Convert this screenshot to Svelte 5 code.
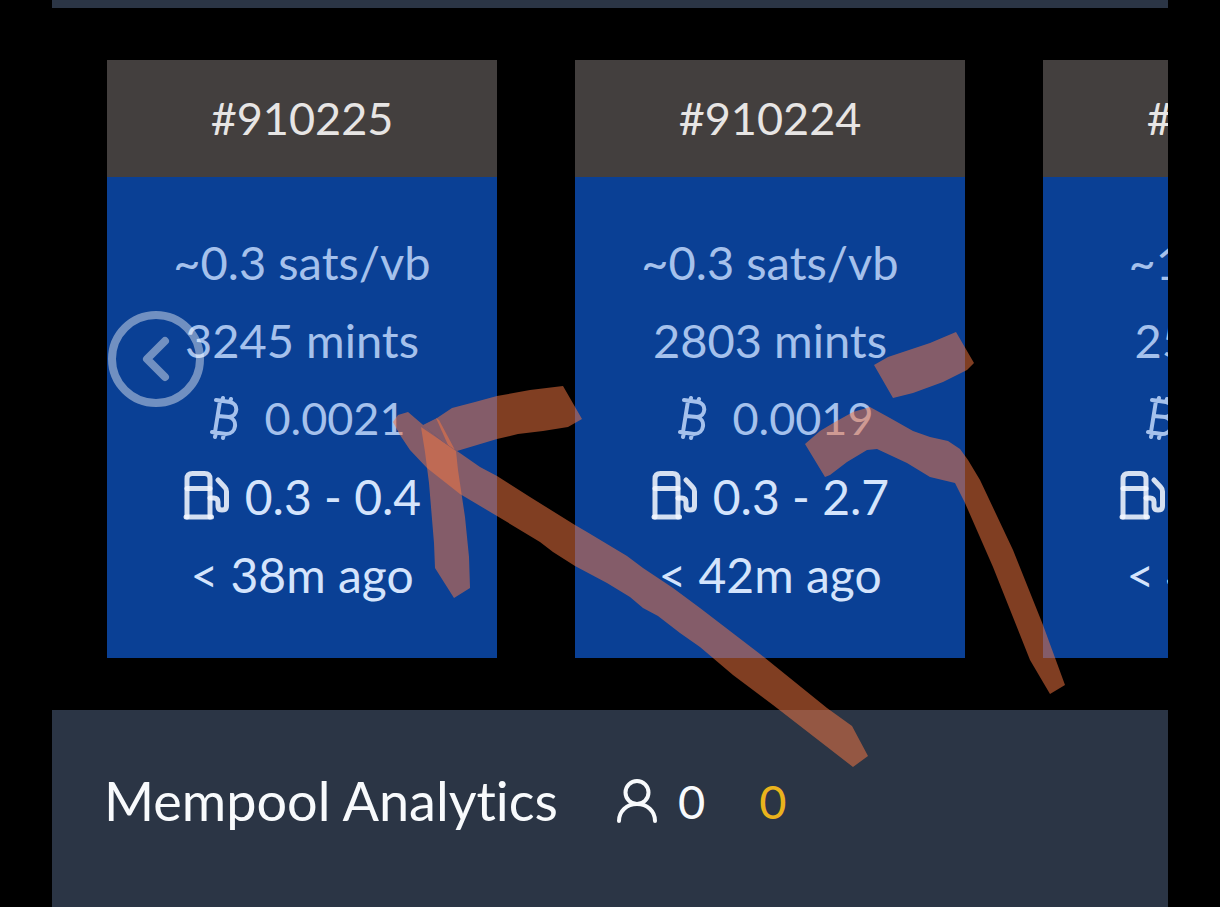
<script>
  const blocks = [
    { height: 910225, rate: '0.3', mints: 3245, btc: '0.0021', fees: '0.3 - 0.4', age: '38m' },
    { height: 910224, rate: '0.3', mints: 2803, btc: '0.0019', fees: '0.3 - 2.7', age: '42m' },
    { height: 910223, rate: '1', mints: 258, btc: '0.0026', fees: '0.3 - 3.0', age: '44m' }
  ];

  // hand-drawn marker strokes laid over the page
  const strokes = [
    '393,422 398,415 408,412 443,442 457,451 480,467 497,476 530,497 575,525 587,532 627,556 643,568 673,588 700,608 760,654 827,708 852,726 868,756 853,767 773,705 733,675 700,647 680,633 658,616 643,608 630,597 607,583 575,566 553,552 540,542 497,516 460,494 427,468 410,450 400,435',
    '423,425 437,418 452,408 475,402 497,396 530,390 563,386 582,419 568,427 543,431 518,434 497,439 457,451 443,442',
    '421,427 443,442 456,451 458,470 462,497 465,517 469,557 470,588 454,598 435,568 434,543 429,483 425,452',
    '436,418 439,420 455,450 448,445',
    '805,444 820,431 835,422 853,412 870,407 890,418 913,431 930,437 948,441 960,449 968,460 980,480 1013,550 1043,625 1065,685 1050,694 1030,660 993,567 965,503 955,483 930,477 907,463 877,449 867,450 847,462 830,475 825,477',
    '874,365 888,357 930,343 956,332 974,363 967,370 943,382 913,393 893,398'
  ];
</script>

<div class="page">
  <div class="strip"></div>

  <section class="carousel" aria-label="Blocks">
    {#each blocks as b}
      <article class="block">
        <h2>#{b.height}</h2>
        <div class="body">
          <div class="row dim">~{b.rate} sats/vb</div>
          <div class="row dim">{b.mints} mints</div>
          <div class="row dim btc">
            <svg width="30" height="46" viewBox="0 0 30 46" aria-hidden="true">
              <path d="M6 5L20 7C29 9 28 21 19 22L8 21M19 22C28 24 27 39 16 39L2 37M10 6L5 37M12 6L13 3M20 7L21 4M6 38L5 42M14 39L13 43" />
            </svg>
            <span>{b.btc}</span>
          </div>
          <div class="row bright gas">
            <svg width="46" height="50" viewBox="0 0 46 50" aria-hidden="true">
              <path d="M4 46V8Q4 2.500 9.500 2.500H21.500Q27 2.500 27 8V46" />
              <path d="M4 17.500H27" />
              <path d="M3 46H28.500" />
              <path d="M27 27H31Q35 27 35 31V35Q35 39 39 39Q43.500 39 43.500 35V20.500Q43.500 18 42 16.500L35 9" />
            </svg>
            <span>{b.fees}</span>
          </div>
          <div class="row bright">&lt; {b.age} ago</div>
        </div>
      </article>
    {/each}
    <button class="prev" aria-label="Previous blocks">
      <svg width="96" height="96" viewBox="0 0 96 96" aria-hidden="true">
        <circle cx="48" cy="48" r="44" />
        <path d="M57 30L39 48L57 66" />
      </svg>
    </button>
  </section>

  <section class="analytics">
    <h1>Mempool Analytics</h1>
    <span class="users">
      <svg width="42" height="46" viewBox="0 0 42 46" aria-hidden="true">
        <circle cx="21" cy="14.500" r="11.500" />
        <path d="M3 43C3 33 11 26 21 26S39 33 39 43" />
      </svg>
      0
    </span>
    <span class="pending">0</span>
  </section>

  <svg class="marker" width="1220" height="907" viewBox="0 0 1220 907" aria-hidden="true">
    {#each strokes as points}
      <polygon {points} />
    {/each}
  </svg>
</div>

<style>
  :global(body){margin:0;background:#000}
  .page{position:relative;box-sizing:border-box;min-height:100vh;padding:0 52px;display:flex;flex-direction:column;
    overflow:hidden;font-family:Lato,"Noto Sans",sans-serif;font-size:47px;font-variant-ligatures:none;color:#f8fafc}
  .strip{height:8px;background:#2b3545}
  .carousel{position:relative;display:flex;gap:78px;padding:52px 55px;overflow:hidden}
  .block{flex:0 0 390px;background:#0a4095}
  h2{margin:0;height:117px;line-height:117px;font-size:45px;font-weight:400;text-align:center;background:#433f3e;color:#e7e5e4}
  .body{padding:46px 0 45px}
  .row{display:flex;align-items:center;justify-content:center;height:78px;white-space:nowrap}
  .dim{color:#a5c1ec}
  .bright{font-size:48px;color:#d4e4fc}
  .btc{gap:24px;padding-left:12px;font-size:45px}
  .gas{gap:16px}
  svg{display:block;fill:none;stroke-linecap:round;stroke-linejoin:round;flex:none}
  .row svg{stroke:currentColor;stroke-width:4}
  .gas svg{stroke:#f2f7ff;stroke-opacity:.87;stroke-width:5}
  .prev{position:absolute;left:56px;top:303px;padding:0;border:0;background:none;cursor:pointer}
  .prev svg{stroke:#fff;stroke-width:8;opacity:.42}
  .analytics{flex:1;display:flex;align-items:flex-start;padding:51px 52px;background:#2b3545;line-height:80px}
  h1{margin:0;font-size:54px;font-weight:400}
  .users{display:flex;align-items:center;gap:20px;margin-left:58px}
  .users svg{stroke:currentColor;stroke-width:4}
  .pending{margin-left:54px;color:#eab31c}
  .marker{position:absolute;left:0;top:0;pointer-events:none}
  .marker polygon{fill:#f67741;fill-opacity:.52}
</style>
